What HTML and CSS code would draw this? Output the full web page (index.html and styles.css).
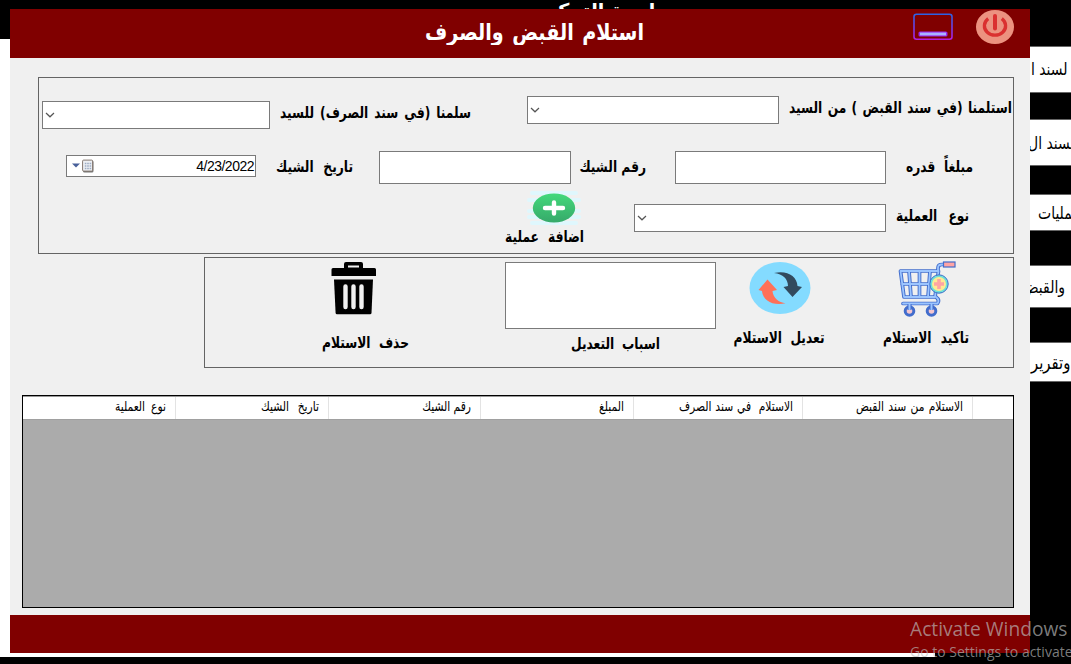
FILE: index.html
```html
<!DOCTYPE html>
<html lang="ar">
<head>
<meta charset="utf-8">
<title>استلام القبض والصرف</title>
<link rel="stylesheet" href="styles.css">
</head>
<body>
<div class="desktop">
  <div class="parent-title" dir="rtl">واجهة التحكم</div>
  <div class="parent-client"></div>
  <div class="side-menu">
    <div class="tile t1"><span dir="rtl">لسند ا</span></div>
    <div class="tile t2"><span dir="rtl">لسند ال</span></div>
    <div class="tile t3"><span dir="rtl">عمليات</span></div>
    <div class="tile t4"><span dir="rtl">والقبض</span></div>
    <div class="tile t5"><span dir="rtl">وتقرير</span></div>
  </div>

  <main class="window">
    <header class="titlebar">
      <h1 class="title" dir="rtl">استلام القبض والصرف</h1>
      <svg class="minimize" width="40" height="28" viewBox="0 0 40 28">
        <defs><linearGradient id="mg" x1="0" y1="0" x2="0" y2="1"><stop offset="0" stop-color="#2b62e4"/><stop offset="1" stop-color="#b01fe0"/></linearGradient></defs>
        <rect x="1" y="1.2" width="38" height="25" rx="2.5" fill="none" stroke="url(#mg)" stroke-width="1.6"/>
        <rect x="5.5" y="18.500" width="29" height="5" rx="1.6" fill="#9a2af0"/>
        <rect x="7" y="19.600" width="26" height="2.800" fill="#a9b4ff"/>
      </svg>
      <svg class="power" width="38" height="34" viewBox="0 0 38 34">
        <ellipse cx="19" cy="17" rx="19" ry="17" fill="#ec9280"/>
        <path d="M12.2 8.6A10.6 9.4 0 1 0 25.8 8.6" fill="none" stroke="#da3030" stroke-width="3.300"/>
        <path d="M19 6V18.4" stroke="#da3030" stroke-width="4" stroke-linecap="round"/>
      </svg>
    </header>

    <section class="content">
      <div class="panel entry">
        <div class="row row1">
          <div class="combo paid-to"><svg width="10" height="6" viewBox="0 0 10 6"><path d="M1 1L5 4.8L9 1"/></svg></div>
          <label class="label l-paid" dir="rtl">سلمنا (في سند الصرف) للسيد</label>
          <div class="combo received-from"><svg width="10" height="6" viewBox="0 0 10 6"><path d="M1 1L5 4.8L9 1"/></svg></div>
          <label class="label l-received" dir="rtl">استلمنا (في سند القبض ) من السيد</label>
        </div>
        <div class="row row2">
          <div class="date">
            <svg width="22" height="14" viewBox="0 0 22 14">
              <path d="M0 4.500H8L4 8.500Z" fill="#48609a"/>
              <rect x="11" y="1.500" width="10.500" height="12" rx="1.5" fill="#777"/>
              <rect x="10.600" y="1.100" width="10" height="11" rx="1" fill="#eef0f4" stroke="#84776f"/>
              <path d="M12.800 4.500H19.300M12.800 7H19.300M12.800 9.500H19.300" stroke="#9dacc3" stroke-width="1.6" stroke-dasharray="1.6 .8"/>
            </svg>
            <span>4/23/2022</span>
          </div>
          <label class="label l-date" dir="rtl">تاريخ الشيك</label>
          <div class="textbox cheque-no"></div>
          <label class="label l-cheque" dir="rtl">رقم الشيك</label>
          <div class="textbox amount"></div>
          <label class="label l-amount" dir="rtl">مبلغاً قدره</label>
        </div>
        <div class="row row3">
          <div class="action add">
            <svg width="54" height="34" viewBox="0 0 54 34">
              <path d="M5 2H49M2 9H52M2 26H52M5 32H49M2 20H52" stroke="#dff7fd" stroke-width="4" stroke-linecap="round"/>
              <defs><linearGradient id="ag" x1="0" y1="0" x2="0" y2="1"><stop offset="0" stop-color="#43d97b"/><stop offset="1" stop-color="#36a96a"/></linearGradient></defs>
              <ellipse cx="27" cy="17" rx="21.2" ry="14.6" fill="url(#ag)"/>
              <path d="M18 17H36M27 11.500V22.500" stroke="#fff" stroke-width="4.4" stroke-linecap="round"/>
            </svg>
            <label class="label l-add" dir="rtl">اضافة عملية</label>
          </div>
          <div class="combo operation"><svg width="10" height="6" viewBox="0 0 10 6"><path d="M1 1L5 4.8L9 1"/></svg></div>
          <label class="label l-operation" dir="rtl">نوع العملية</label>
        </div>
      </div>

      <div class="panel commands">
        <div class="action delete">
          <svg width="46" height="54" viewBox="0 0 46 54">
            <path d="M13 6V2Q13 0 15 0H30Q32 0 32 2V6H43.500Q45 6 45 7.500V14H.500V7.500Q.500 6 2 6ZM17 3.500V5.500H28V3.500Z" fill-rule="evenodd"/>
            <path d="M3 17.500H42L40.500 51Q40.400 52.300 39 52.300H6Q4.700 52.300 4.600 51Z"/>
            <path d="M14.500 24.500V45M22.500 24.500V45M30.500 24.500V45" stroke="#f0f0f0" stroke-width="4.400" stroke-linecap="round"/>
          </svg>
          <label class="label l-delete" dir="rtl">حذف الاستلام</label>
        </div>
        <div class="action reasons">
          <div class="textbox reason-box"></div>
          <label class="label l-reasons" dir="rtl">اسباب التعديل</label>
        </div>
        <div class="action edit">
          <svg width="62" height="52" viewBox="0 0 62 52">
            <ellipse cx="31" cy="26" rx="30.500" ry="26" fill="#84dbff"/>
            <path d="M25 11C38 8 48 14 48.500 24L53 25L43.500 35L34.500 25L39 24C39 17 34 12 25 11Z" fill="#324a5e"/>
            <path d="M36.500 41.300C24 44 14 39 13 29L9.500 28L18.500 17.500L28 28L23.500 29C24 36 30 40.500 36.500 41.300Z" fill="#ff7058"/>
          </svg>
          <label class="label l-edit" dir="rtl">تعديل الاستلام</label>
        </div>
        <div class="action confirm">
          <svg width="58" height="58" viewBox="0 0 58 58">
            <g fill="none" stroke-linecap="round" stroke-linejoin="round">
              <path d="M2.500 10H40M2.500 10L6 36H37L40.500 10M4 23H38M11 10L13 36M21.500 10V36M32 10L30 36M40 10V7Q40 3.500 44 3.500H47M38 36Q42 39 39.500 42.500H5" stroke="#426dcc" stroke-width="3.700"/>
              <path d="M2.500 10H40M2.500 10L6 36H37L40.500 10M4 23H38M11 10L13 36M21.500 10V36M32 10L30 36M40 10V7Q40 3.500 44 3.500H47M38 36Q42 39 39.500 42.500H5" stroke="#9cc5ff" stroke-width="1.800"/>
            </g>
            <rect x="45.500" y="1" width="11.500" height="5" fill="#ffa4a4" stroke="#426dcc" stroke-width="1.200"/>
            <circle cx="11.500" cy="50" r="4.300" fill="#f4c6ce" stroke="#426dcc" stroke-width="3"/>
            <circle cx="33.500" cy="50" r="4.300" fill="#f4c6ce" stroke="#426dcc" stroke-width="3"/>
            <path d="M11.500 43V49M33.500 43V49" stroke="#426dcc" stroke-width="4"/>
            <path d="M11.500 43V49M33.500 43V49" stroke="#9cc5ff" stroke-width="2"/>
            <circle cx="41" cy="23" r="9.200" fill="#6fe0d8" stroke="#426dcc" stroke-width="1"/>
            <circle cx="41" cy="23" r="7" fill="#ffea92"/>
            <path d="M41 18V28M36 23H46" stroke="#ffa4a4" stroke-width="3.600"/>
          </svg>
          <label class="label l-confirm" dir="rtl">تاكيد الاستلام</label>
        </div>
      </div>

      <div class="grid">
        <div class="grid-head">
          <div class="cell" dir="rtl"><span class="w51">نوع العملية</span></div>
          <div class="cell" dir="rtl"><span class="w58">تاريخ الشيك</span></div>
          <div class="cell" dir="rtl"><span class="w47">رقم الشيك</span></div>
          <div class="cell" dir="rtl"><span class="w27">المبلغ</span></div>
          <div class="cell" dir="rtl"><span class="w114">الاستلام&nbsp; في سند الصرف</span></div>
          <div class="cell" dir="rtl"><span class="w107">الاستلام من سند القبض</span></div>
          <div class="cell"></div>
        </div>
      </div>
    </section>
    <footer class="footer"></footer>
  </main>

  <div class="watermark">
    <div class="wm-title">Activate Windows</div>
    <div class="wm-text">Go to Settings to activate Windows.</div>
  </div>
</div>
</body>
</html>
```
FILE: styles.css
```css
* { box-sizing: border-box; }
body { margin: 0; background: #000; font-family: "DejaVu Sans", sans-serif; color: #000; }
svg { display: block; }
.desktop { position: relative; width: 1071px; height: 664px; overflow: hidden; background: #000; }

.parent-title { position: absolute; left: 549px; top: -1px; width: 118px; height: 10px; overflow: hidden; color: #fff; font-size: 19px; font-weight: bold; line-height: 22px; white-space: nowrap; }
.parent-client { position: absolute; left: 0; top: 39px; width: 935px; height: 618px; background: #fff; }

.side-menu { position: absolute; left: 1030px; top: 46px; width: 41px; display: flex; flex-direction: column; }
.tile { display: flex; align-items: center; overflow: hidden; background: #fff; border: solid #666; border-width: 1px 0; font-family: "DejaVu Sans Condensed", "DejaVu Sans", sans-serif; font-size: 15.5px; white-space: nowrap; }
.tile span { flex: none; transform: scaleY(1.1); }
.t1 { height: 47px; padding-left: 1px; }
.t2 { height: 47px; margin-top: 26px; padding-left: 0; }
.t2 span { margin-left: -2px; }
.t3 { height: 37px; margin-top: 28px; padding-left: 8px; }
.t4 { height: 43px; margin-top: 34px; justify-content: flex-end; padding-right: 6px; }
.t5 { height: 40px; margin-top: 34px; padding-left: 1px; font-size: 16.5px; }

.window { position: absolute; left: 10px; top: 9px; width: 1020px; height: 644px; display: flex; flex-direction: column; background: #f0f0f0; }
.titlebar { height: 49px; flex: none; display: flex; align-items: flex-start; background: #800000; }
.title { margin: 9px 0 0 415px; width: 219px; font-family: "DejaVu Sans Condensed", "DejaVu Sans", sans-serif; font-size: 21.3px; line-height: 28px; color: #fff; white-space: nowrap; text-align-last: justify; transform: scaleY(1.08); }
.minimize { margin: 4px 0 0 269px; }
.power { margin: 1px 0 0 23px; }
.content { flex: 1; display: flex; flex-direction: column; }
.footer { height: 38px; flex: none; background: #800000; }

.panel { border: 1px solid #646464; }
.label { font-family: "DejaVu Sans Condensed", "DejaVu Sans", sans-serif; font-size: 13.6px; line-height: 18px; height: 20px; font-weight: bold; white-space: nowrap; text-align-last: justify; flex: none; transform: scaleY(1.15); }
.combo, .textbox, .date { flex: none; background: #fff; border: 1px solid #7a7a7a; }
.combo { height: 28px; padding: 10px 0 0 2px; }
.combo path { fill: none; stroke: #555; stroke-width: 1.2; }
.row { display: flex; align-items: flex-start; }

.entry { width: 976px; height: 177px; margin: 19px 0 0 28px; }
.row1 { padding: 18px 0 0 3px; height: 73px; }
.paid-to { width: 228px; margin-top: 5px; }
.l-paid { width: 191px; margin: 7px 0 0 10px; }
.received-from { width: 252px; margin-left: 56px; }
.l-received { width: 223px; margin: 2px 0 0 10px; }
.row2 { padding-left: 27px; height: 40px; }
.date { width: 190px; height: 22px; margin-top: 4px; padding: 0 1px 0 5px; display: flex; justify-content: space-between; align-items: center; font: 14px/20px "Liberation Sans", Arial, sans-serif; }
.date span { font-size: 14px; letter-spacing: -.5px; }
.l-date { width: 77px; margin: 6px 0 0 20px; }
.textbox { height: 33px; }
.cheque-no { width: 192px; margin-left: 26px; }
.l-cheque { width: 65px; margin: 6px 0 0 10px; }
.amount { width: 211px; margin-left: 29px; }
.l-amount { width: 67px; margin: 6px 0 0 20px; }
.row3 { padding-left: 466px; }
.action { display: flex; flex-direction: column; align-items: center; flex: none; }
.add { width: 79px; }
.add svg { margin-left: 19px; }
.l-add { width: 79px; margin-top: 2px; }
.operation { width: 252px; margin: 13px 0 0 50px; }
.l-operation { width: 73px; margin: 15px 0 0 10px; }

.commands { width: 810px; height: 111px; margin: 3px 0 0 194px; display: flex; align-items: flex-start; padding: 4px 0 0 117px; }
.delete { width: 87px; }
.delete svg { margin-right: 23px; }
.l-delete { width: 87px; margin-top: 17px; }
.reasons { width: 211px; margin-left: 96px; }
.reason-box { width: 211px; height: 67px; }
.l-reasons { width: 89px; margin: 5px 0 0 10px; }
.edit { width: 92px; margin-left: 17px; }
.edit svg { margin-left: 1px; }
.l-edit { width: 91px; margin-top: 14px; }
.confirm { width: 86px; margin-left: 58px; }
.l-confirm { width: 86px; margin-top: 9px; }
.confirm svg { margin: -1px 0 0 1px; }

.grid { width: 992px; height: 213px; margin: 27px 0 0 12px; border: 1px solid #000; background: #ababab; }
.grid-head { height: 24px; display: grid; grid-template-columns: 153px 153px 152px 153px 169px 170px 1fr; background: #fff; border-top: 1px solid #999; border-bottom: 1px solid #a0a0a0; }
.cell { display: flex; padding-right: 9px; border-right: 1px solid #e3e3e3; font: 11.9px/21px "DejaVu Sans Condensed", "DejaVu Sans", sans-serif; white-space: nowrap; }
.cell:last-child { border: 0; }
.cell span { text-align-last: justify; transform: scaleY(1.15); }
.w51 { width: 51px; }
.w58 { width: 58px; }
.w47 { width: 47px; }
.w27 { width: 27px; }
.w114 { width: 114px; }
.w107 { width: 107px; }

.watermark { position: absolute; left: 910px; top: 616px; color: rgba(190, 190, 190, .66); font-family: "Open Sans", "Noto Sans", sans-serif; white-space: nowrap; }
.wm-title { font-size: 19.2px; line-height: 26px; }
.wm-text { font-size: 14px; line-height: 20px; }
```
